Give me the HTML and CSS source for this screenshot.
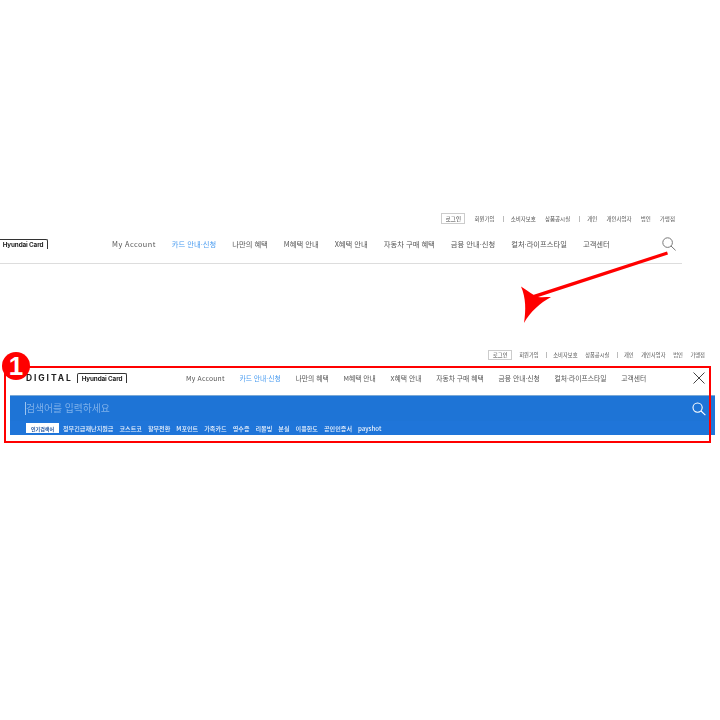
FILE: index.html
```html
<!DOCTYPE html>
<html lang="ko">
<head>
<meta charset="utf-8">
<title>Hyundai Card</title>
<link rel="stylesheet" href="styles.css">
</head>
<body>
<main class="page">
  <section class="before">
    <div class="util util-before">
      <span class="login">로그인</span>
      <span class="u u1">회원가입</span><i class="sep"></i>
      <span class="u">소비자보호</span>
      <span class="u u2">상품공시실</span><i class="sep"></i>
      <span class="u">개인</span>
      <span class="u">개인사업자</span>
      <span class="u">법인</span>
      <span class="u">가맹점</span>
    </div>
    <header class="bar-before">
      <span class="card-logo clip">Hyundai Card</span>
      <nav class="nav nav-before">
        <a>My Account</a><a class="on">카드 안내·신청</a><a>나만의 혜택</a><a>M혜택 안내</a><a>X혜택 안내</a><a>자동차 구매 혜택</a><a>금융 안내·신청</a><a>컬처·라이프스타일</a><a>고객센터</a>
      </nav>
      <svg class="search" viewBox="0 0 14 14"><circle cx="5.6" cy="5.6" r="4.8"/><path d="M9 9l4.6 4.4"/></svg>
    </header>
  </section>

  <section class="after">
    <div class="util util-after">
      <span class="login">로그인</span>
      <span class="u u1">회원가입</span><i class="sep"></i>
      <span class="u">소비자보호</span>
      <span class="u u2">상품공시실</span><i class="sep"></i>
      <span class="u">개인</span>
      <span class="u">개인사업자</span>
      <span class="u">법인</span>
      <span class="u">가맹점</span>
    </div>
    <header class="bar-after">
      <span class="digital">DIGITAL</span>
      <span class="card-logo">Hyundai Card</span>
      <nav class="nav nav-after">
        <a>My Account</a><a class="on">카드 안내·신청</a><a>나만의 혜택</a><a>M혜택 안내</a><a>X혜택 안내</a><a>자동차 구매 혜택</a><a>금융 안내·신청</a><a>컬처·라이프스타일</a><a>고객센터</a>
      </nav>
      <svg class="close" viewBox="0 0 12 12"><path d="M.5.5l11 11M11.5.5l-11 11"/></svg>
    </header>
    <div class="panel">
      <div class="query">
        <span class="placeholder">검색어를 입력하세요</span>
        <svg class="search-white" viewBox="0 0 14 14"><circle cx="5.6" cy="5.6" r="4.6"/><path d="M9 9l4.4 4.2"/></svg>
      </div>
      <div class="tags">
        <b class="chip">인기검색어</b>
        <span>정부긴급재난지원금</span><span>코스트코</span><span>할부전환</span><span>M포인트</span><span>가족카드</span><span>영수증</span><span>리볼빙</span><span>분실</span><span>이용한도</span><span>공인인증서</span><span>payshot</span>
      </div>
    </div>
  </section>
</main>

<div class="redbox"></div>
<div class="badge">1</div>
<svg class="arrow" viewBox="0 0 720 720">
  <path d="M667 251.500L668 254.500L532 299L530 296Z"/>
  <path d="M521 286.500C528 291 533 295 538 297C542 297.500 547 297 551 297C540 303 530 312 524 323C526 310 526 298 521 286.500Z"/>
</svg>
</body>
</html>
```
FILE: styles.css
```css
* { box-sizing: border-box; }
html, body { margin: 0; padding: 0; background: #fff; }
body {
  width: 720px;
  height: 720px;
  overflow: hidden;
  position: relative;
  font-family: "Noto Sans CJK KR", "Noto Sans", sans-serif;
}
.page { padding-top: 212px; filter: blur(0.4px); }

.util { display: flex; align-items: center; height: 13px; font-size: 5.500px; color: #555; justify-content: flex-end; }
.util-before { padding-right: 45px; }
.util-after { padding-right: 15px; font-size: 5.300px; }
.login { width: 24px; height: 11px; border: 1px solid #ccc; display: flex; align-items: center; justify-content: center; color: #444; margin-right: 9px; }
.u { margin-right: 9px; white-space: nowrap; }
.u:last-child { margin-right: 0; }
.sep { width: 1px; height: 6px; background: #bbb; margin-right: 7px; }
.u1 { margin-right: 8px; }
.u2 { margin-right: 9px; }
.util-after .login { height: 10px; margin-right: 7px; }
.util-after .u { margin-right: 7.500px; }
.util-after .u:last-child { margin-right: 0; }
.util-after .sep { margin-right: 6px; }

.before { height: 136px; }
.bar-before {
  width: 682px;
  height: 39px;
  border-bottom: 1px solid #ddd;
  display: flex;
  align-items: center;
  padding-bottom: 1px;
  padding-right: 6px;
}
.card-logo {
  flex: none;
  width: 50px;
  height: 10px;
  border: 1px solid #333;
  border-bottom: 0;
  border-radius: 2px 2px 0 0;
  font: 700 6.300px/10px "Inter", "Noto Sans", sans-serif;
  color: #222;
  text-align: center;
  white-space: nowrap;
  letter-spacing: -0.1px;
}
.clip { margin-left: -2px; }
.nav { display: flex; align-items: center; color: #555; white-space: nowrap; }
.nav a { display: block; }
.nav .on { color: #4a9cf0; }
.nav-before { font-size: 7.300px; gap: 16px; margin-left: 64px; flex: 1; }
.nav-before a:first-child { letter-spacing: 0.45px; }
.search { width: 14px; height: 14px; fill: none; stroke: #777; stroke-width: 1; flex: none; }

.bar-after {
  height: 34px;
  display: flex;
  align-items: center;
  padding-left: 26px;
  padding-right: 15px;
}
.digital {
  flex: none;
  width: 46px;
  font: 700 8.500px/1 "Inter", "Noto Sans", sans-serif;
  letter-spacing: 1.900px;
  color: #222;
  margin-right: 5px;
  white-space: nowrap;
}
.nav-after { font-size: 6.800px; gap: 14.750px; margin-left: 59px; flex: 1; }
.nav-after a:first-child { letter-spacing: 0.2px; }
.close { width: 12px; height: 12px; fill: none; stroke: #444; stroke-width: 1; flex: none; }

.panel {
  width: 705px;
  height: 40px;
  margin-left: 10px;
  background: #1e74d6;
  border-top: 1px solid #7aa9d6;
}
.query { height: 25px; display: flex; align-items: center; justify-content: space-between; padding: 0 9px 0 15px; }
.placeholder { font-size: 9.800px; color: #7fb1ea; border-left: 1px solid #9cc4f0; line-height: 13px; white-space: nowrap; }
.search-white { width: 14px; height: 14px; fill: none; stroke: #fff; stroke-width: 1.100; }
.tags { height: 14px; padding-left: 16px; display: flex; align-items: center; gap: 6px; background: #1f75d9; color: #eef4fd; font-size: 6.100px; font-weight: 500; white-space: nowrap; }
.chip { width: 33px; height: 10px; background: #fff; color: #1a4f9c; font-size: 5px; font-weight: 700; display: flex; align-items: center; justify-content: center; margin-right: -2px; }

.redbox { position: absolute; left: 4px; top: 366px; width: 707px; height: 77px; border: 2px solid #f00; }
.badge {
  position: absolute; left: 2px; top: 352px; width: 28px; height: 28px; border-radius: 50%;
  background: #f00; color: #fff; text-align: center;
  font: 700 26px/28px "Liberation Sans", sans-serif;
}
.arrow { position: absolute; left: 0; top: 0; width: 720px; height: 720px; fill: #f00; pointer-events: none; }
```
